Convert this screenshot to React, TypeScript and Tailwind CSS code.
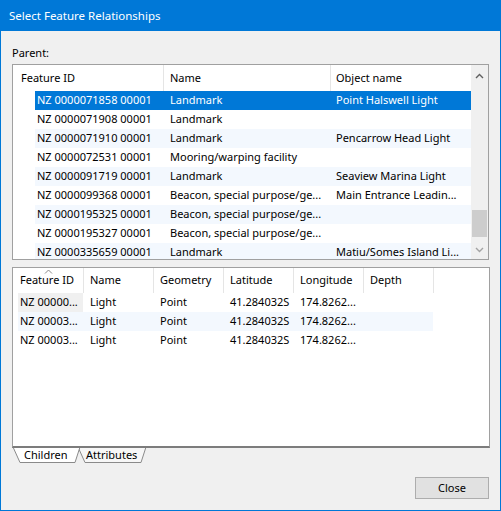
import React from "react";

const parentRows: [string, string, string][] = [
  ["NZ 0000071858 00001", "Landmark", "Point Halswell Light"],
  ["NZ 0000071908 00001", "Landmark", ""],
  ["NZ 0000071910 00001", "Landmark", "Pencarrow Head Light"],
  ["NZ 0000072531 00001", "Mooring/warping facility", ""],
  ["NZ 0000091719 00001", "Landmark", "Seaview Marina Light"],
  ["NZ 0000099368 00001", "Beacon, special purpose/ge...", "Main Entrance Leadin..."],
  ["NZ 0000195325 00001", "Beacon, special purpose/ge...", ""],
  ["NZ 0000195327 00001", "Beacon, special purpose/ge...", ""],
  ["NZ 0000335659 00001", "Landmark", "Matiu/Somes Island Li..."],
];

const childRows: string[][] = [
  ["NZ 00000...", "Light", "Point", "41.284032S", "174.8262...", ""],
  ["NZ 00003...", "Light", "Point", "41.284032S", "174.8262...", ""],
  ["NZ 00003...", "Light", "Point", "41.284032S", "174.8262...", ""],
];

const childHeaders = ["Feature ID", "Name", "Geometry", "Latitude", "Longitude", "Depth"];

function Chevron({ up, color }: { up: boolean; color: string }) {
  return (
    <svg width="9" height="6" viewBox="0 0 9 6">
      <path
        d={up ? "M1 5 L4.5 1.5 L8 5" : "M1 1 L4.5 4.5 L8 1"}
        fill="none"
        stroke={color}
        strokeWidth="1.4"
      />
    </svg>
  );
}

export default function App() {
  return (
    <div className="w-[501px] h-[511px] bg-[#f0f0f0] border-x border-b border-[#0078d7] flex flex-col font-['Noto_Sans',sans-serif] text-[11px] text-black">
      {/* Title bar */}
      <div className="h-[31px] shrink-0 bg-[#0078d7] text-white text-[11.5px] flex items-center pl-[8px]">
        Select Feature Relationships
      </div>

      <div className="flex flex-col px-[11px]">
        <div className="mt-[14px] h-[15px] leading-[15px]">Parent:</div>

        {/* Parent list */}
        <div className="mt-[4px] h-[196px] w-[477px] border border-[#a0a0a0] bg-white flex overflow-hidden">
          <div className="w-[458px] flex flex-col overflow-hidden">
            <div className="h-[26px] shrink-0 flex items-center">
              <div className="w-[151px] h-full flex items-center pl-[8px] border-r border-[#e5e5e5]">Feature ID</div>
              <div className="w-[167px] h-full flex items-center pl-[6px] border-r border-[#e5e5e5]">Name</div>
              <div className="flex-1 h-full flex items-center pl-[5px]">Object name</div>
            </div>
            {parentRows.map((r, i) => (
              <div
                key={i}
                className={
                  "h-[19px] shrink-0 ml-[22px] flex items-center whitespace-nowrap " +
                  (i === 0 ? "bg-[#0078d7] text-white" : i % 2 === 0 ? "bg-[#f3f8fe]" : "bg-white")
                }
              >
                <div className="w-[128px] pl-[2px] overflow-hidden">{r[0]}</div>
                <div className="w-[167px] pl-[7px] overflow-hidden">{r[1]}</div>
                <div className="flex-1 pl-[6px] overflow-hidden">{r[2]}</div>
              </div>
            ))}
          </div>
          {/* Scrollbar */}
          <div className="w-[17px] bg-[#f0f0f0] flex flex-col items-center">
            <div className="h-[17px] w-full flex items-center justify-center mt-[2px]">
              <Chevron up color="#606060" />
            </div>
            <div className="flex-1 w-full flex flex-col">
              <div className="h-[126px]" />
              <div className="mx-[1px] h-[27px] bg-[#cdcdcd]" />
            </div>
            <div className="h-[17px] w-full flex items-center justify-center mb-[1px]">
              <Chevron up={false} color="#a3a3a3" />
            </div>
          </div>
        </div>

        {/* Children panel */}
        <div className="mt-[7px] h-[181px] w-[478px] border-x border-t border-[#a0a0a0] border-b-2 border-b-[#7c7c7c] bg-white flex flex-col overflow-hidden">
          <div className="h-[25px] shrink-0 flex">
            {childHeaders.map((h, i) => (
              <div
                key={h}
                className={
                  "relative h-full flex items-center border-r border-[#e5e5e5] " +
                  (i === 0 ? "w-[71px] pl-[7px]" : "w-[70px] pl-[6px]")
                }
              >
                {i === 0 && (
                  <svg className="absolute top-[1px] left-[31px]" width="9" height="5" viewBox="0 0 9 5">
                    <path d="M1 4.5 L4.5 1 L8 4.5" fill="none" stroke="#8a8a8a" strokeWidth="1" />
                  </svg>
                )}
                {h}
              </div>
            ))}
          </div>
          {childRows.map((r, i) => (
            <div
              key={i}
              className={
                "h-[19px] shrink-0 ml-[5px] w-[415px] flex items-center whitespace-nowrap " +
                (i === 1 ? "bg-[#f3f8fe]" : "bg-white")
              }
            >
              <div className={"w-[65px] h-full flex items-center pl-[2px] " + (i === 0 ? "bg-[#f0f0f0]" : "")}>{r[0]}</div>
              <div className="w-[70px] pl-[7px]">{r[1]}</div>
              <div className="w-[70px] pl-[7px]">{r[2]}</div>
              <div className="w-[70px] pl-[7px]">{r[3]}</div>
              <div className="w-[70px] pl-[7px]">{r[4]}</div>
              <div className="w-[70px] pl-[7px]">{r[5]}</div>
            </div>
          ))}
        </div>

        {/* Tabs */}
        <svg width="150" height="16" viewBox="0 0 150 16" className="shrink-0 block">
          <polygon points="66,-1 73,14.5 129,14.5 134,-1" fill="#f7f7f7" stroke="#8a8a8a" strokeWidth="1" />
          <polygon points="1,-1 8,14.5 63,14.5 68,-1" fill="#ffffff" stroke="#8a8a8a" strokeWidth="1" />
          <text x="12" y="11" fontSize="11" fontFamily="Noto Sans, sans-serif" fill="#000">Children</text>
          <text x="74" y="11" fontSize="11" fontFamily="Noto Sans, sans-serif" fill="#000">Attributes</text>
        </svg>

        {/* Close button */}
        <div className="mt-[13px] flex justify-end">
          <button className="w-[74px] h-[22px] bg-[#e1e1e1] border border-[#adadad] text-[11px] flex items-center justify-center">
            Close
          </button>
        </div>
      </div>
    </div>
  );
}
